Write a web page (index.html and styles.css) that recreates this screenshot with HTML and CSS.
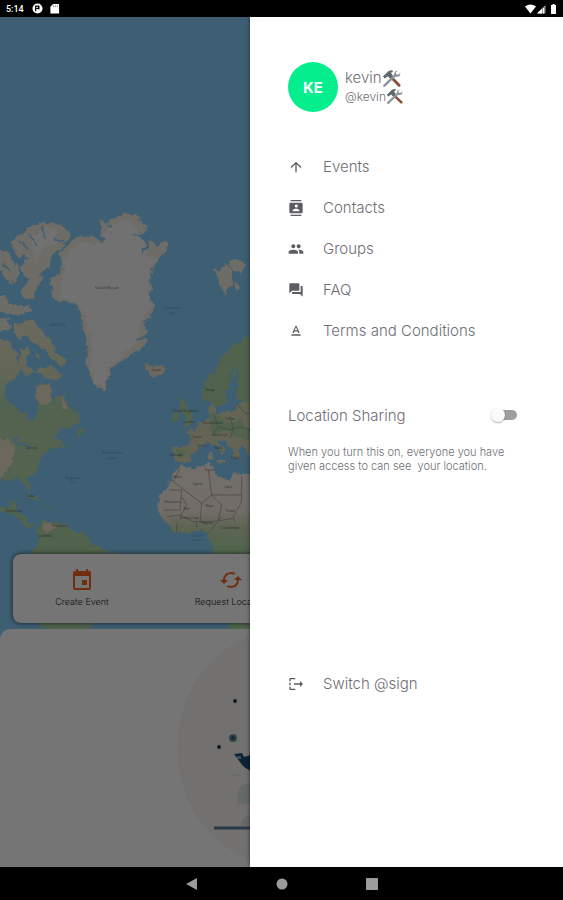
FILE: index.html
```html
<!DOCTYPE html>
<html lang="en">

<head>
  <meta charset="UTF-8" />
  <meta name="viewport" content="width=device-width, initial-scale=1.0" />
  <title>Menu</title>
  <link rel="stylesheet" href="styles.css">
</head>

<body>
  <header class="status-bar">
    <span class="clock">5:14</span>
    <svg class="status-icon" viewBox="0 0 12 12"><circle cx="6" cy="6" r="5.500" fill="#fff"/><path d="M4 3v6M4 3.500h3v2.500H4.500M7.500 3v4" stroke="#000" stroke-width="1.300" fill="none"/></svg>
    <svg class="status-icon" viewBox="0 0 12 12"><path d="M4.500 1H11v10.500H1.500V4z" fill="#fff"/><path d="M5 2.500v2M7 2.500v2M9 2.500v2" stroke="#777" stroke-width=".8"/></svg>
    <svg class="status-signal" viewBox="0 0 34 12"><path d="M0 3.500Q5.500-.5 11 3.500L5.500 10.500z" fill="#fff"/><path d="M12 10.500 20.500 2v8.500z" fill="#999"/><path d="M12 10.500 17 5.500v5z" fill="#fff"/><path d="M18.500 5v5.500" stroke="#fff"/><path d="M26 2h1.500V1h2v1H31v9h-5z" fill="#fff"/></svg>
  </header>

  <main class="screen">
    <svg class="map" viewBox="0 -549 1689 2550" preserveAspectRatio="xMinYMin slice" aria-hidden="true">
      <defs>
        <filter id="coast" x="0" y="0" width="1" height="1">
          <feTurbulence type="fractalNoise" baseFrequency=".045" numOctaves="3" seed="8"/>
          <feDisplacementMap in="SourceGraphic" scale="24" xChannelSelector="R" yChannelSelector="G"/>
        </filter>
        <linearGradient id="africa" x1="0" y1="790" x2="0" y2="1070" gradientUnits="userSpaceOnUse">
          <stop offset="0" stop-color="#faf0e8"/>
          <stop offset=".5" stop-color="#f8eee4"/>
          <stop offset=".68" stop-color="#ccdcb4"/>
          <stop offset="1" stop-color="#a9dba3"/>
        </linearGradient>
        <linearGradient id="america" x1="0" y1="350" x2="0" y2="700" gradientUnits="userSpaceOnUse">
          <stop offset="0" stop-color="#e9e6cf"/>
          <stop offset=".5" stop-color="#d8dfbd"/>
          <stop offset=".75" stop-color="#b4d8ac"/>
          <stop offset="1" stop-color="#b8d8ae"/>
        </linearGradient>
      </defs>

      <g filter="url(#coast)">
        <rect class="sea" x="-60" y="-600" width="1800" height="2700"/>

        <!-- Greenland -->
        <path class="tundra" d="M185 175L178 155 215 125 240 105 270 112 275 98 292 120 310 117 300 68 345 55 372 40 410 45 425 68 445 92 425 105 400 115 430 120 440 145 450 120 468 136 492 122 506 134 490 165 470 182 460 205 450 240 460 268 445 290 462 312 450 350 428 365 440 390 442 425 420 450 385 468 355 490 330 505 325 545 312 577 290 565 272 530 260 490 262 440 250 390 240 345 228 312 205 302 165 300 150 280 165 268 145 248 155 232 180 222z"/>
        <path class="ice" d="M195 178L215 145 250 125 310 135 320 85 372 60 405 75 415 108 428 125 445 170 468 175 455 205 440 245 450 285 445 330 420 370 412 430 365 468 322 505 316 565 290 555 275 510 270 400 245 330 220 298 180 292 190 230z"/>
        <path class="inlet" d="M272 98L305 130M318 75L335 80M400 103L440 103M430 160L448 125M410 420L440 400M425 365L445 385M250 430L265 440"/>

        <!-- Arctic islands -->
        <path class="tundra" d="M30 125L70 100 90 75 150 65 195 80 208 105 190 140 150 175 145 205 125 225 120 255 100 275 105 300 70 295 60 275 85 240 60 205 85 180 70 160 50 170z"/>
        <path class="ice" d="M90 110L140 80 180 95 170 125 125 150 110 190 95 150z"/>
        <path class="tundra" d="M-30 150L20 150 35 180 60 210 45 250 15 235 0 210-30 210zM-30 285L20 290 30 315 90 315 98 335 60 348 25 340-30 330zM-30 355L25 355 30 385-30 400z"/>
        <path class="inlet" d="M90 105L110 140M125 80L135 115M60 120L85 145M160 120L190 125M10 190L30 215"/>
        <path class="america" d="M40 370L100 360 120 390 155 420 165 455 200 485 185 500 150 480 140 450 105 430 75 410 60 420 45 405zM110 510L150 495 190 530 170 545 130 530zM60 450L85 440 80 500 110 520 75 530 55 500zM110 460l14 5-4 14-12-6z"/>
        <path class="tundra" d="M640 200L655 215 665 200 680 192 700 225 692 245 678 290 665 265 650 235zM685 185L720 178 740 195 720 215 695 212zM700 240L720 265 710 272 700 258z"/>

        <!-- North America -->
        <path class="america" d="M-30 410L20 420 45 450 60 500 50 530 20 550 8 585 40 620 75 640 100 670 115 620 108 570 115 550 145 550 158 575 155 610 175 590 190 580 200 610 235 645 240 665 215 680 170 695 160 715 185 720 200 740 170 740 150 745 120 780 115 810 85 835 82 850 95 865 90 870 75 850 50 838 0 845-30 850z"/>
        <path class="dry" d="M-30 715L25 720 45 745 35 790 10 830-30 840zM110 555L150 555 155 600 125 615 108 590zM182 580L195 610 205 630 185 625z"/>
        <path class="green" d="M225 685L245 685 255 700 235 708zM-30 920L25 925 35 905 50 900 50 930 80 955 85 970 110 975 105 983 75 980 50 950 15 935-30 925zM75 885L105 890 125 905 110 905zM130 910L158 915 145 922z"/>
        <path class="inlet" d="M45 715L55 740 75 730M75 745L100 738"/>

        <!-- South America -->
        <path class="green" d="M110 985L125 965 150 965 200 975 215 990 260 1000 275 1035 350 1060 390 1110 340 1180 300 1260 230 1310 120 1280 80 1100 95 1060 115 1030z"/>
        <path class="dry" d="M125 970L155 968 165 985 140 1000z"/>

        <!-- Europe -->
        <path class="dry" d="M435 492L465 500 490 495 492 515 470 532 448 522z"/>
        <path class="green" d="M610 550L650 500 670 465 710 430 760 405 900 405 900 610 730 610 715 545 715 495 700 540 680 580 675 615 650 620 610 600zM540 595L555 600 560 625 580 645 580 670 550 678 558 650 540 620zM515 640L535 635 535 662 518 666zM705 570l60-10 0 50-55-10z"/>
        <path class="europe" d="M630 620L645 615 645 640 700 630 720 610 900 600 900 770 750 770 735 745 720 730 720 780 705 775 695 745 655 715 650 728 680 750 665 765 645 735 625 720 600 740 580 760 570 785 545 792 520 780 520 740 570 740 575 715 555 695 590 685 600 665 628 650z"/>
        <path class="green" d="M630 640L660 645 680 670 720 660 750 690 750 720 710 715 680 690 650 710 630 690zM530 745l30 5-15 25-15-10z"/>
        <path class="dry" d="M625 755l10 0 0 25-8 0zM655 780l20 0-5 10z"/>
        <path class="inlet" d="M700 500L685 580M640 520L655 500"/>

        <!-- Africa -->
        <path fill="url(#africa)" d="M540 800L580 805 635 790 640 815 665 830 690 840 700 820 900 830 900 1300 690 1300 650 1110 640 1050 625 1030 625 1000 600 985 570 1000 530 1000 500 970 475 940 480 890 510 850 520 825z"/>
      </g>

      <path class="border" d="M540 805L520 845 605 910 635 885 725 885M605 910L600 970M635 885L625 810M725 830V905M510 870L545 870 540 930 490 930M545 890L560 915 540 950M635 885L665 915 655 960M725 905L700 950 705 965M500 950L540 945 580 965 640 965 700 955M530 970V1000M590 965L590 985M625 1000L665 950M640 640L655 680 690 690 720 680 750 690M590 735L625 740M655 680L640 700M690 650L700 690 690 715M710 610L735 640 750 640"/>

      <g class="places">
        <text x="320" y="268">Kalaallit Nunaat</text>
        <text x="468" y="513">Ísland</text>
        <text x="630" y="572">Norge</text>
        <text x="555" y="637">United Kingdom</text>
        <text x="568" y="668">London</text>
        <text x="590" y="715">France</text>
        <text x="638" y="672">Deutschland</text>
        <text x="690" y="660">Polska</text>
        <text x="658" y="708">Österreich</text>
        <text x="528" y="768">Portugal</text>
        <text x="655" y="748">Italia</text>
        <text x="706" y="778">Ελλάς</text>
        <text x="630" y="813">Tunisie</text>
        <text x="533" y="835">Maroc</text>
        <text x="592" y="856">Algérie</text>
        <text x="685" y="863">Libya</text>
        <text x="518" y="908">Mauritanie</text>
        <text x="560" y="930">Mali</text>
        <text x="630" y="922">Niger</text>
        <text x="690" y="935">Tchad</text>
        <text x="568" y="956">Burkina Faso</text>
        <text x="622" y="973">Nigeria</text>
        <text x="692" y="986">Centrafrique</text>
        <text x="95" y="748">Toronto</text>
        <text x="90" y="890">Cuba</text>
        <text x="40" y="936">Guatemala</text>
        <text x="180" y="982">Venezuela</text>
        <text x="135" y="1012">Colombia</text>
      </g>
      <g class="seas">
        <text x="174" y="378">Baffin Bay</text>
        <text x="516" y="327">Greenland</text>
        <text x="516" y="343">Sea</text>
        <text x="336" y="761">North Atlantic</text>
        <text x="336" y="777">Ocean</text>
        <text x="216" y="836">Sargasso</text>
        <text x="216" y="850">Sea</text>
        <text x="590" y="1010">Gulf of</text>
        <text x="590" y="1024">Guinea</text>
      </g>
    </svg>

    <div class="home">
      <div class="actions">
        <button class="action" type="button">
          <svg class="action-icon" viewBox="0 0 24 24"><path fill="currentColor" d="M17 12h-5v5h5v-5zM16 1v2H8V1H6v2H5c-1.100 0-2 .9-2 2v15c0 1.100.9 2 2 2h14c1.100 0 2-.9 2-2V5c0-1.100-.9-2-2-2h-1V1h-2zm3 19H5V8h14v12z"/></svg>
          Create Event
        </button>
        <button class="action" type="button">
          <svg class="action-icon" viewBox="0 0 24 24"><path fill="currentColor" d="M19 8l-4 4h3c0 3.300-2.700 6-6 6-1 0-2-.3-2.800-.7l-1.500 1.500C9 19.500 10.400 20 12 20c4.400 0 8-3.600 8-8h3l-4-4zM6 12c0-3.300 2.700-6 6-6 1 0 2 .3 2.800.7l1.500-1.500C15 4.500 13.600 4 12 4c-4.400 0-8 3.600-8 8H1l4 4 4-4H6z"/></svg>
          Request Location
        </button>
      </div>
      <section class="sheet">
        <svg class="empty-art" viewBox="0 0 210 238" aria-hidden="true">
          <ellipse cx="105" cy="119" rx="105" ry="117" fill="#faf4f5"/>
          <circle cx="58" cy="72" r="2" fill="#1d3d59"/>
          <circle cx="56" cy="109" r="4" fill="#6f93ab"/>
          <circle cx="56" cy="109" r="2" fill="#3a617e"/>
          <circle cx="42" cy="118" r="2" fill="#1d3d59"/>
          <path d="M57 125l8-1 2 4 10-3v18q-10-3-14-10z" fill="#1d4a78"/>
          <path d="M60 127h4v3h-4z" fill="#8fa9bd"/>
          <path d="M54 147q5-4 10 0zM61 175q-3-22 16-22v22zM64 197q0-11 13-11v11z" fill="#dde5e6"/>
          <path d="M37 199h136" stroke="#5d7f96" stroke-width="3"/>
        </svg>
      </section>
    </div>

    <div class="scrim"></div>

    <aside class="drawer">
      <div class="profile">
        <div class="avatar">KE</div>
        <div class="who">
          <div class="name">kevin<svg class="tools" viewBox="0 0 20 20"><use href="#tools"/></svg></div>
          <div class="handle">@kevin<svg class="tools" viewBox="0 0 20 20"><use href="#tools"/></svg></div>
        </div>
      </div>

      <nav class="menu">
        <a class="menu-item" href="#">
          <svg class="menu-icon" viewBox="0 0 24 24"><path d="M4 12l1.400 1.400L11 7.800V20h2V7.800l5.600 5.600L20 12l-8-8-8 8z"/></svg>
          Events
        </a>
        <a class="menu-item" href="#">
          <svg class="menu-icon" viewBox="0 0 24 24"><path d="M20 0H4v2h16V0zM4 24h16v-2H4v2zM20 4H4c-1.100 0-2 .9-2 2v12c0 1.100.9 2 2 2h16c1.100 0 2-.9 2-2V6c0-1.100-.9-2-2-2zm-8 2.800a2.300 2.300 0 1 1 0 4.500 2.300 2.300 0 0 1 0-4.500zM17 17H7v-1.500c0-1.700 3.300-2.500 5-2.500s5 .8 5 2.500V17z"/></svg>
          Contacts
        </a>
        <a class="menu-item" href="#">
          <svg class="menu-icon" viewBox="0 0 24 24"><path d="M16 11c1.700 0 3-1.300 3-3s-1.300-3-3-3-3 1.300-3 3 1.300 3 3 3zm-8 0c1.700 0 3-1.300 3-3S9.700 5 8 5 5 6.300 5 8s1.300 3 3 3zm0 2c-2.300 0-7 1.200-7 3.500V19h14v-2.500C15 14.200 10.300 13 8 13zm8 0c-.3 0-.6 0-1 .1 1.200.8 2 2 2 3.400V19h6v-2.500c0-2.300-4.700-3.500-7-3.500z"/></svg>
          Groups
        </a>
        <a class="menu-item" href="#">
          <svg class="menu-icon" viewBox="0 0 24 24"><path d="M21 6h-2v9H6v2c0 .6.5 1 1 1h11l4 4V7c0-.6-.5-1-1-1zm-4 6V3c0-.6-.5-1-1-1H3c-.6 0-1 .5-1 1v14l4-4h10c.6 0 1-.5 1-1z"/></svg>
          FAQ
        </a>
        <a class="menu-item" href="#">
          <svg class="menu-icon" viewBox="0 0 24 24"><path d="M5 17v2h14v-2H5zm4.500-4.200h5l.9 2.200h2.100L12.800 4h-1.500L6.500 15h2.100l.9-2.200zM12 6l1.900 5h-3.800L12 6z"/></svg>
          Terms and Conditions
        </a>
      </nav>

      <label class="sharing" for="sharing">
        Location Sharing
        <input class="switch" type="checkbox" role="switch" id="sharing">
      </label>
      <p class="hint">When you turn this on, everyone you have given access to can see &nbsp;your location.</p>

      <a class="menu-item switch-sign" href="#">
        <svg class="menu-icon" viewBox="0 0 24 24"><path d="M4 3h7v2H4v3H2V5c0-1.100.9-2 2-2zM2 10h2v4H2zM2 16h2v3h7v2H4c-1.100 0-2-.9-2-2zM9 11h9V7.500L22.500 12 18 16.500V13H9z"/></svg>
        Switch @sign
      </a>
    </aside>
  </main>

  <footer class="nav-bar">
    <button class="nav-button" type="button" aria-label="Back"><svg viewBox="0 0 12 12"><path d="M0 6L11 0v12z"/></svg></button>
    <button class="nav-button" type="button" aria-label="Home"><svg viewBox="0 0 12 12"><circle cx="6" cy="6" r="5.500"/></svg></button>
    <button class="nav-button" type="button" aria-label="Recent apps"><svg viewBox="0 0 12 12"><rect width="12" height="12" rx="1"/></svg></button>
  </footer>

  <svg class="sprite" aria-hidden="true">
    <symbol id="tools" viewBox="0 0 20 20">
      <path d="M9 8l9 9" stroke="#8a4f3c" stroke-width="3" stroke-linecap="round"/>
      <path d="M2.500 17.500L14 6.500" stroke="#8b959b" stroke-width="2.600" stroke-linecap="round"/>
      <path d="M17 1.500l-3.500 1-1 4 2 2 4-1 1-3.500-2.500 2-2-.5-.5-2z" fill="#8b959b"/>
      <path d="M1 8l6-6q3-1.500 5 0L9.500 4l2 3-3 3-2.500-2.500L3 10z" fill="#5f686d"/>
    </symbol>
  </svg>
</body>

</html>
```
FILE: styles.css
```css
* {
  box-sizing: border-box;
}

body {
  margin: 0;
  height: 100vh;
  display: flex;
  flex-direction: column;
  overflow: hidden;
  background: #000;
  color: #6e6e73;
  font-family: Inter, 'Liberation Sans', sans-serif;
  font-weight: 300;
  font-size: 15px;
}

a {
  color: inherit;
  text-decoration: none;
}

button {
  border: none;
  background: none;
  padding: 0;
  font: inherit;
  color: inherit;
}

.sprite {
  display: none;
}

/* Android system bars */
.status-bar {
  height: 17px;
  flex-shrink: 0;
  display: flex;
  align-items: center;
  gap: 6px;
  padding: 0 4px 0 6px;
}

.clock {
  color: #fff;
  font-family: Roboto, sans-serif;
  font-weight: 500;
  font-size: 9px;
  margin-right: 2px;
}

.status-icon {
  width: 11px;
  height: 11px;
}

.status-signal {
  width: 34px;
  height: 12px;
  margin-left: auto;
}

.nav-bar {
  height: 33px;
  flex-shrink: 0;
  display: flex;
  align-items: center;
  justify-content: center;
  gap: 78px;
}

.nav-button {
  width: 12px;
  height: 12px;
}

.nav-button svg {
  display: block;
  fill: #9b9b9b;
}

/* Map screen */
.screen {
  flex: 1;
  min-height: 0;
  position: relative;
  overflow: hidden;
  background: #87cdfa;
}

.map {
  position: absolute;
  top: 0;
  left: 0;
  width: 100%;
  height: 100%;
}

.sea { fill: #87cdfa; }
.tundra { fill: #efebdf; }
.ice { fill: #f9f6f6; }
.america { fill: url(#america); }
.dry { fill: #ece2cc; }
.green { fill: #b0d6a8; }
.europe { fill: #d9d9b8; }

.inlet {
  fill: none;
  stroke: #87cdfa;
  stroke-width: 6;
}

.border {
  fill: none;
  stroke: #9d9096;
  stroke-width: 2;
}

.places,
.seas {
  font-family: 'Noto Sans', sans-serif;
  font-size: 10px;
  fill: #44404c;
  text-anchor: middle;
}

.seas {
  fill: #4a86b8;
}

.home {
  position: relative;
  height: 100%;
  display: flex;
  flex-direction: column;
  justify-content: flex-end;
  gap: 6px;
}

.actions {
  height: 69px;
  margin: 0 13px;
  padding: 0 11px;
  display: flex;
  gap: 33px;
  background: #fff;
  border-radius: 8px;
  box-shadow: 0 0 5px rgba(0, 0, 0, 0.7);
}

.action {
  width: 116px;
  display: flex;
  flex-direction: column;
  align-items: center;
  justify-content: center;
  gap: 2px;
  font-size: 9px;
  line-height: 16px;
  color: #222;
}

.action-icon {
  width: 24px;
  height: 24px;
  color: #f2661f;
}

.sheet {
  height: 238px;
  display: flex;
  justify-content: center;
  background: #fff;
  border-radius: 10px 10px 0 0;
}

.empty-art {
  width: 210px;
  height: 238px;
}

.scrim {
  position: absolute;
  inset: 0;
  background: rgba(0, 0, 0, 0.54);
}

/* Drawer */
.drawer {
  position: absolute;
  top: 0;
  right: 0;
  bottom: 0;
  width: 313px;
  padding: 45px 46px 0 38px;
  background: #fff;
  box-shadow: 0 0 4px rgba(0, 0, 0, 0.6);
}

.profile {
  display: flex;
  align-items: center;
  gap: 7px;
}

.avatar {
  width: 50px;
  height: 50px;
  border-radius: 50%;
  display: flex;
  align-items: center;
  justify-content: center;
  background: #05ee8e;
  color: #fff;
  font-size: 15px;
  font-weight: 700;
}

.name,
.handle {
  display: flex;
  align-items: center;
  line-height: 18px;
}

.handle {
  font-size: 12px;
}

.tools {
  width: 19px;
  height: 19px;
}

.handle .tools {
  width: 17px;
  height: 17px;
}

.menu {
  margin-top: 34px;
}

.menu-item {
  height: 41px;
  display: flex;
  align-items: center;
  gap: 19px;
}

.menu-icon {
  width: 16px;
  height: 16px;
  fill: #5c5c63;
}

.sharing {
  height: 24px;
  margin-top: 52px;
  display: flex;
  align-items: center;
  justify-content: space-between;
}

.switch {
  appearance: none;
  position: relative;
  width: 26px;
  height: 14px;
  margin: 0;
}

.switch::before {
  content: '';
  position: absolute;
  inset: 2px 0 2px 4px;
  border-radius: 5px;
  background: #9e9e9e;
}

.switch::after {
  content: '';
  position: absolute;
  top: 0;
  left: 0;
  width: 14px;
  height: 14px;
  border-radius: 50%;
  background: #fafafa;
  box-shadow: 0 1px 2px rgba(0, 0, 0, 0.3);
}

.switch:checked::after {
  left: 12px;
}

.hint {
  margin: 18px 0 0;
  font-size: 11px;
  line-height: 14px;
}

.switch-sign {
  margin-top: 190px;
}
```
